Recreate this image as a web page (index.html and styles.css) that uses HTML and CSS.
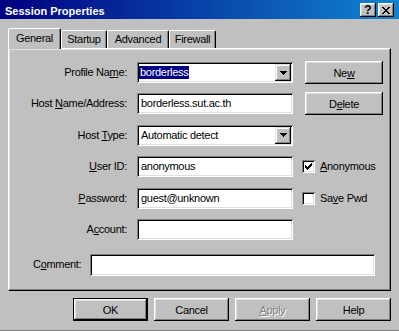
FILE: index.html
```html
<!DOCTYPE html>
<html lang="en">
<head>
	<meta charset="UTF-8">
	<title>Session Properties</title>
	<link rel="stylesheet" href="styles.css">
</head>
<body>
	<div class="window">
		<div class="titlebar">
			<span class="title">Session Properties</span>
			<div class="caption-buttons">
				<span class="cap-btn help-btn">?</span>
				<span class="cap-btn">
					<svg width="8" height="7" viewBox="0 0 8 7" shape-rendering="crispEdges">
						<path d="M0 0h2v1h-2zM6 0h2v1h-2zM1 1h2v1h-2zM5 1h2v1h-2zM2 2h4v1h-4zM3 3h2v1h-2zM2 4h4v1h-4zM1 5h2v1h-2zM5 5h2v1h-2zM0 6h2v1h-2zM6 6h2v1h-2z" fill="#000"/>
					</svg>
				</span>
			</div>
		</div>

		<div class="dialog">
			<div class="tabs">
				<div class="tab active tab-general">General</div>
				<div class="tab tab-startup">Startup</div>
				<div class="tab tab-advanced">Advanced</div>
				<div class="tab tab-firewall">Firewall</div>
			</div>

			<div class="panel">
				<div class="form-grid">
					<span class="label">Profile Na<u>m</u>e:</span>
					<div class="combo">
						<span class="combo-text"><span class="selected">borderless</span></span>
						<span class="drop-btn">
							<svg width="7" height="4" viewBox="0 0 7 4" shape-rendering="crispEdges"><path d="M0 0h7v1h-7zM1 1h5v1h-5zM2 2h3v1h-3zM3 3h1v1h-1z" fill="#000"/></svg>
						</span>
					</div>
					<button type="button" class="btn side-btn">Ne<u>w</u></button>

					<span class="label">Host <u>N</u>ame/Address:</span>
					<div class="field">borderless.sut.ac.th</div>
					<button type="button" class="btn side-btn">D<u>e</u>lete</button>

					<span class="label">Host <u>T</u>ype:</span>
					<div class="combo">
						<span class="combo-text plain">Automatic detect</span>
						<span class="drop-btn">
							<svg width="7" height="4" viewBox="0 0 7 4" shape-rendering="crispEdges"><path d="M0 0h7v1h-7zM1 1h5v1h-5zM2 2h3v1h-3zM3 3h1v1h-1z" fill="#000"/></svg>
						</span>
					</div>
					<span></span>

					<span class="label"><u>U</u>ser ID:</span>
					<div class="field">anonymous</div>
					<div class="check-row">
						<span class="checkbox">
							<svg width="7" height="7" viewBox="0 0 7 7" shape-rendering="crispEdges"><path d="M6 0h1v1h-1zM5 1h2v1h-2zM0 2h1v1h-1zM4 2h3v1h-3zM0 3h2v1h-2zM3 3h3v1h-3zM0 4h5v1h-5zM1 5h3v1h-3zM2 6h1v1h-1z" fill="#000"/></svg>
						</span>
						<span><u>A</u>nonymous</span>
					</div>

					<span class="label"><u>P</u>assword:</span>
					<div class="field">guest@unknown</div>
					<div class="check-row">
						<span class="checkbox"></span>
						<span>Sa<u>v</u>e Pwd</span>
					</div>

					<span class="label">A<u>c</u>count:</span>
					<div class="field"></div>
					<span></span>
				</div>

				<div class="comment-row">
					<span class="comment-label">C<u>o</u>mment:</span>
					<div class="field comment-field"></div>
				</div>
			</div>

			<div class="button-row">
				<button type="button" class="btn dlg-btn default-btn">OK</button>
				<button type="button" class="btn dlg-btn">Cancel</button>
				<button type="button" class="btn dlg-btn disabled"><u>A</u>pply</button>
				<button type="button" class="btn dlg-btn">Help</button>
			</div>
		</div>
	</div>
</body>
</html>
```

FILE: styles.css
```css
* {
	box-sizing: border-box;
	margin: 0;
	padding: 0;
}

body {
	background-color: #c0c0c0;
	font-family: "Liberation Sans", Arial, sans-serif;
	font-size: 11px;
	letter-spacing: -0.3px;
	color: #000;
}

.window {
	width: 399px;
	height: 331px;
	background-color: #c0c0c0;
	border-bottom: 1px solid #808080;
	display: flex;
	flex-direction: column;
}

/* title bar */
.titlebar {
	height: 19px;
	display: flex;
	align-items: flex-start;
	justify-content: space-between;
	padding: 3px 5px 0 5px;
	background: linear-gradient(to right, #000080, #1084d0);
	color: #fff;
}

.title {
	font-weight: bold;
	letter-spacing: 0;
	line-height: 13px;
	margin-top: 2px;
}

.caption-buttons {
	display: flex;
	gap: 2px;
}

.cap-btn {
	width: 16px;
	height: 14px;
	display: flex;
	align-items: center;
	justify-content: center;
	background-color: #c0c0c0;
	color: #000;
	box-shadow: inset -1px -1px #000, inset 1px 1px #fff, inset -2px -2px #808080, inset 2px 2px #dfdfdf;
}

.help-btn {
	font-weight: bold;
	font-size: 12px;
	line-height: 12px;
	letter-spacing: 0;
}

/* dialog body */
.dialog {
	padding: 9px 8px 0 8px;
}

.tabs {
	height: 20px;
	display: flex;
	align-items: flex-end;
}

.tab {
	height: 18px;
	padding-top: 2px;
	line-height: 13px;
	text-align: center;
	background-color: #c0c0c0;
	border-top: 1px solid #fff;
	border-left: 1px solid #fff;
	border-right: 1px solid #000;
	border-radius: 2px 2px 0 0;
	box-shadow: inset -1px 0 #808080;
}

.tab.active {
	height: 21px;
	padding-top: 3px;
	margin-bottom: -1px;
	position: relative;
	z-index: 1;
}

.tab-general { width: 53px; }
.tab-startup { width: 46px; }
.tab-advanced { width: 62px; }
.tab-firewall { width: 47px; }

.panel {
	width: 383px;
	height: 243px;
	padding-top: 13px;
	border: 1px solid;
	border-color: #fff #000 #000 #fff;
	box-shadow: inset -1px -1px #808080, inset 1px 1px #dfdfdf;
}

.form-grid {
	display: grid;
	grid-template-columns: 128px 165px 1fr;
	grid-auto-rows: 21px;
	row-gap: 10.4px;
	align-items: center;
}

.label {
	text-align: right;
	padding-right: 10px;
	line-height: 13px;
}

.field {
	width: 156px;
	height: 21px;
	padding: 2px 4px;
	line-height: 17px;
	background-color: #fff;
	white-space: nowrap;
	overflow: hidden;
	box-shadow: inset 1px 1px #808080, inset -1px -1px #fff, inset 2px 2px #000, inset -2px -2px #dfdfdf;
}

.combo {
	width: 156px;
	height: 21px;
	padding: 2px;
	display: flex;
	background-color: #fff;
	box-shadow: inset 1px 1px #808080, inset -1px -1px #fff, inset 2px 2px #000, inset -2px -2px #dfdfdf;
}

.combo-text {
	flex: 1;
	display: flex;
	align-items: center;
	white-space: nowrap;
}

.combo-text.plain {
	padding-left: 2px;
}

.selected {
	background-color: #000080;
	color: #fff;
	line-height: 13px;
	padding: 0 1px;
}

.drop-btn {
	width: 16px;
	height: 17px;
	display: flex;
	align-items: center;
	justify-content: center;
	background-color: #c0c0c0;
	box-shadow: inset -1px -1px #000, inset 1px 1px #dfdfdf, inset -2px -2px #808080, inset 2px 2px #fff;
}

.btn {
	font-family: inherit;
	font-size: 11px;
	letter-spacing: -0.3px;
	color: #000;
	background-color: #c0c0c0;
	border: none;
	height: 23px;
	box-shadow: inset -1px -1px #000, inset 1px 1px #fff, inset -2px -2px #808080, inset 2px 2px #dfdfdf;
}

.side-btn {
	width: 78px;
	margin-left: 3px;
	justify-self: start;
}

.check-row {
	display: flex;
	align-items: center;
	gap: 5px;
	line-height: 13px;
}

.checkbox {
	width: 13px;
	height: 13px;
	display: flex;
	align-items: center;
	justify-content: center;
	background-color: #fff;
	box-shadow: inset 1px 1px #808080, inset -1px -1px #fff, inset 2px 2px #000, inset -2px -2px #dfdfdf;
}

.comment-row {
	display: flex;
	align-items: center;
	margin-top: 14px;
	padding-left: 24px;
}

.comment-label {
	width: 57px;
	line-height: 13px;
}

.comment-field {
	width: 285px;
	height: 22px;
}

.button-row {
	display: flex;
	justify-content: flex-end;
	gap: 6px;
	margin-top: 7px;
}

.dlg-btn {
	width: 75px;
}

.default-btn {
	border: 1px solid #000;
}

.disabled {
	color: #808080;
	text-shadow: 1px 1px #fff;
}
```
